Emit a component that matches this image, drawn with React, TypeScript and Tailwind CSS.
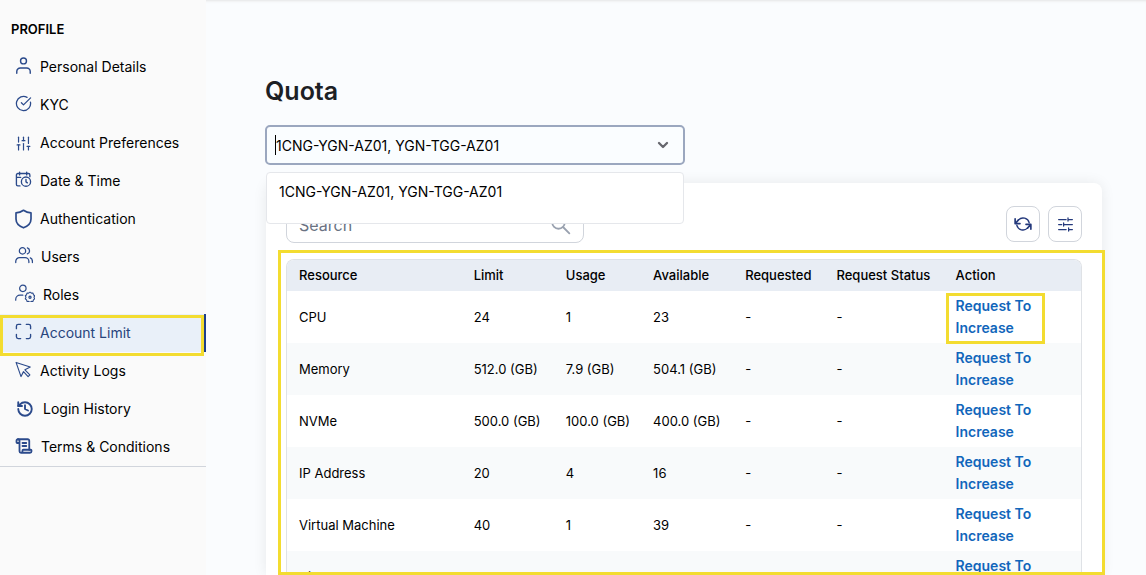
import React from "react";
import { CircleCheckBig, SlidersVertical, ScrollText, History, ChevronDown } from "lucide-react";

type IconProps = { className?: string };

const stroke = {
  viewBox: "0 0 24 24",
  fill: "none",
  stroke: "currentColor",
  strokeLinecap: "round" as const,
  strokeLinejoin: "round" as const,
  "aria-hidden": true,
};

const PersonIcon = ({ className }: IconProps) => (
  <svg {...stroke} strokeWidth="2" className={className}>
    <circle cx="12" cy="5.5" r="4.2" />
    <path d="M2.5 23v-2.5a5 5 0 0 1 5-5h9a5 5 0 0 1 5 5V23" />
  </svg>
);

const CheckIcon = ({ className }: IconProps) => <CircleCheckBig className={className} strokeWidth={1.8} />;
const SlidersIcon = ({ className }: IconProps) => <SlidersVertical className={className} strokeWidth={1.7} />;
const HistoryIcon = ({ className }: IconProps) => <History className={className} strokeWidth={2.5} />;
const TermsIcon = ({ className }: IconProps) => <ScrollText className={className} strokeWidth={2.4} />;

const CalendarClockIcon = ({ className }: IconProps) => (
  <svg {...stroke} strokeWidth="1.9" className={className}>
    <path d="M6.5 1.5v4M16.500 1.500v4M21 8V5.500a2 2 0 0 0-2-2H4a2 2 0 0 0-2 2V19a2 2 0 0 0 2 2h3M2 9h6" />
    <circle cx="15.500" cy="15" r="6.500" />
    <path d="M15.500 12v3.300l2 1.500" />
  </svg>
);

const ShieldIcon = ({ className }: IconProps) => (
  <svg viewBox="2 0 20 24" fill="none" stroke="currentColor" strokeLinejoin="round" strokeWidth="2" aria-hidden="true" className={className}>
    <path d="M12 1.500c2.500 1.700 5.500 2.900 9 3.200v7.300c0 5-3.600 8.500-9 10.600-5.400-2.100-9-5.600-9-10.600V4.700c3.500-.3 6.500-1.500 9-3.200z" />
  </svg>
);

const PeopleIcon = ({ className }: IconProps) => (
  <svg {...stroke} strokeWidth="1.7" className={className}>
    <circle cx="10" cy="6.500" r="4.200" />
    <path d="M1 22v-1.500a5 5 0 0 1 5-5h7.500a5 5 0 0 1 5 5V22M16.500 2.500a4.200 4.200 0 0 1 0 8M20.500 15.800a5 5 0 0 1 2.700 4.700V22" />
  </svg>
);

const PersonGearIcon = ({ className }: IconProps) => (
  <svg viewBox="0 0 28 24" fill="none" stroke="currentColor" strokeLinecap="round" strokeLinejoin="round" strokeWidth="1.7" aria-hidden="true" className={className}>
    <circle cx="11" cy="5.500" r="4.500" />
    <path d="M1 22v-1a6 6 0 0 1 6-6h4" />
    <path d="m21 10.800 1.900 1.400 2.300-.1.600 2.300 1.800 1.500-1 2.100 1 2.100-1.800 1.500-.6 2.200-2.300-.1-1.900 1.400-1.900-1.400-2.300.1-.6-2.200-1.800-1.500 1-2.100-1-2.100 1.800-1.500.6-2.300 2.300.1z" strokeWidth="1.500" />
    <circle cx="21" cy="18" r="1.500" />
  </svg>
);

const CornersIcon = ({ className }: IconProps) => (
  <svg {...stroke} strokeWidth="1.900" className={className}>
    <path d="M2 8V4.500A2.500 2.500 0 0 1 4.500 2H8M16 2h3.500A2.500 2.500 0 0 1 22 4.500V8M22 16v3.500a2.500 2.500 0 0 1-2.500 2.500H16M8 22H4.500A2.500 2.500 0 0 1 2 19.500V16" />
  </svg>
);

const PointerIcon = ({ className }: IconProps) => (
  <svg {...stroke} strokeWidth="1.600" className={className}>
    <path d="M1.500 2l20 6.500-7.500 4 7 7-2.500 2.500-6.500-7L8.500 22z" />
  </svg>
);

const RefreshIcon = ({ className }: IconProps) => (
  <svg {...stroke} strokeWidth="1.800" className={className}>
    <path d="M6 6.500a8.500 8.500 0 0 1 14.300 4M3.700 13.500a8.500 8.500 0 0 0 14.300 4" />
    <path d="M1.500 5v6.500H8M22.500 19v-6.500H16M2 11l4-4.500M22 13l-4 4.500" strokeWidth="2.200" />
  </svg>
);

const FilterIcon = ({ className }: IconProps) => (
  <svg {...stroke} strokeWidth="2" className={className}>
    <path d="M1 4h12M16 4h7M16 1.500v5M1 12h5M10 12h13M9 9.500v5M1 20h12M17 20h6M17 17.500v5" />
  </svg>
);

const SearchIcon = ({ className }: IconProps) => (
  <svg {...stroke} strokeWidth="2.200" className={className}>
    <circle cx="9" cy="9" r="7.500" />
    <path d="m15 15 7 7" />
  </svg>
);

const raised = "mb-1 size-[17px]";
const level = "size-[17px]";

const menu: { label: string; icon: React.ComponentType<IconProps>; box: string; active?: boolean }[] = [
  { label: "Personal Details", icon: PersonIcon, box: raised },
  { label: "KYC", icon: CheckIcon, box: raised },
  { label: "Account Preferences", icon: SlidersIcon, box: level },
  { label: "Date & Time", icon: CalendarClockIcon, box: raised },
  { label: "Authentication", icon: ShieldIcon, box: "h-5 w-[17px]" },
  { label: "Users", icon: PeopleIcon, box: "mb-1 size-[18px]" },
  { label: "Roles", icon: PersonGearIcon, box: "mb-1 h-[18px] w-5" },
  { label: "Account Limit", icon: CornersIcon, box: raised, active: true },
  { label: "Activity Logs", icon: PointerIcon, box: raised },
  { label: "Login History", icon: HistoryIcon, box: "h-[18px] w-5" },
  { label: "Terms & Conditions", icon: TermsIcon, box: "mb-0.5 size-[18px]" },
];

const columns = ["Resource", "Limit", "Usage", "Available", "Requested", "Request Status", "Action"];

const rows = [
  ["CPU", "24", "1", "23"],
  ["Memory", "512.0 (GB)", "7.9 (GB)", "504.1 (GB)"],
  ["NVMe", "500.0 (GB)", "100.0 (GB)", "400.0 (GB)"],
  ["IP Address", "20", "4", "16"],
  ["Virtual Machine", "40", "1", "39"],
  ["Virtual Router", "20", "0", "20"],
];

const region = "1CNG-YGN-AZ01, YGN-TGG-AZ01";

function Sidebar() {
  return (
    <aside className="w-[206px] shrink-0 bg-[#fafafa]">
      <nav aria-label="Profile" className="border-b border-gray-300 pt-[19px]">
        <h2 className="h-[29px] pl-[11px] text-[13px] leading-5 font-semibold text-black">PROFILE</h2>
        <ul>
          {menu.map(({ label, icon: Icon, box, active }) => (
            <li key={label} className="relative">
              <a
                href="#"
                aria-current={active ? "page" : undefined}
                className={
                  active
                    ? "flex h-[38px] items-center gap-2 border-r-2 border-[#1d3f8a] bg-[#e9f0f9] pl-[15px] text-sm text-[#27447c]"
                    : "flex h-[38px] items-center gap-2 pl-[15px] text-sm text-black"
                }
              >
                <Icon className={`shrink-0 text-[#2b4a8b] ${box}`} />
                <span className="whitespace-nowrap">{label}</span>
              </a>
              {active && <div className="pointer-events-none absolute -bottom-1 left-0 h-[41px] w-[204px] border-3 border-[#f3dc30]" />}
            </li>
          ))}
        </ul>
      </nav>
    </aside>
  );
}

function RegionSelect() {
  return (
    <div className="relative z-10 w-[420px] max-w-full">
      <div className="flex h-10 items-center rounded-[5px] border-2 border-[#9ba7bf] bg-[#fafdff] pr-3 pl-2">
        <span className="h-5 w-px bg-black" />
        <input
          role="combobox"
          aria-label="Availability zone"
          aria-expanded="true"
          aria-controls="zones"
          defaultValue={region}
          className="h-6 min-w-0 flex-1 bg-transparent text-sm text-black outline-none"
        />
        <ChevronDown className="size-4 text-[#66676e]" strokeWidth={3.5} />
      </div>
      <ul id="zones" role="listbox" aria-label="Zones" className="absolute top-[47px] right-px left-px h-[52px] rounded-sm border border-gray-200 bg-white">
        <li role="option" aria-selected="true" className="px-3 py-[9px] text-sm text-black">
          {region}
        </li>
      </ul>
    </div>
  );
}

const iconButton = "grid h-9 w-[34px] place-items-center rounded-lg border border-gray-300 bg-white text-[#24397c]";

export default function App() {
  return (
    <div className="flex h-screen overflow-hidden bg-[#fafcfe] font-[Inter,sans-serif] shadow-[inset_0_3px_3px_-2px_#e4e4e4]">
      <Sidebar />
      <main className="flex min-w-0 flex-1 flex-col pt-[74px] pr-11 pl-[59px]">
        <h1 className="mb-[17px] text-[25px] leading-[34px] font-semibold text-[#1c2024]">Quota</h1>
        <RegionSelect />
        <section className="relative mt-[18px] ml-px flex min-h-0 flex-1 flex-col rounded-t-lg bg-white px-5 pt-[23px] shadow-[0_0_14px_rgba(0,0,0,0.08)]">
          <div className="flex justify-between">
            <label className="flex h-[37px] w-[298px] items-center rounded-lg border border-gray-300 px-3">
              <input type="search" aria-label="Search" placeholder="Search" className="min-w-0 flex-1 bg-transparent text-base outline-none placeholder:text-gray-500" />
              <SearchIcon className="size-5 text-gray-400" />
            </label>
            <div className="flex gap-2">
              <button type="button" aria-label="Refresh" className={iconButton}>
                <RefreshIcon className="size-[18px]" />
              </button>
              <button type="button" aria-label="Filter columns" className={iconButton}>
                <FilterIcon className="size-[15px]" />
              </button>
            </div>
          </div>
          <div className="mt-4 min-h-0 flex-1 overflow-hidden rounded-t-lg border border-b-0 border-[#dfe2e6]">
            <table className="w-full table-fixed text-left text-[13px] text-black">
              <colgroup>
                <col className="w-[22%]" />
                <col className="w-[11.6%]" />
                <col className="w-[11%]" />
                <col className="w-[11.6%]" />
                <col className="w-[11.5%]" />
                <col className="w-[15%]" />
                <col />
              </colgroup>
              <thead>
                <tr className="h-[31px] bg-[#e8edf4]">
                  {columns.map((c) => (
                    <th key={c} scope="col" className="pl-3 font-medium whitespace-nowrap">
                      {c}
                    </th>
                  ))}
                </tr>
              </thead>
              <tbody>
                {rows.map((row, i) => (
                  <tr key={row[0]} className="h-[52px] even:bg-[#f8fafb]">
                    {[...row, "-", "-"].map((cell, j) => (
                      <td key={j} className="pt-0.5 pl-3 whitespace-nowrap">
                        {cell}
                      </td>
                    ))}
                    <td className="relative pl-3">
                      <button type="button" className="w-24 text-left text-sm leading-[22px] font-semibold text-[#1166bb]">
                        Request To Increase
                      </button>
                      {i === 0 && <div className="pointer-events-none absolute top-0.5 left-0.5 h-[51px] w-[99px] border-3 border-[#f3dc30]" />}
                    </td>
                  </tr>
                ))}
              </tbody>
            </table>
          </div>
          <div className="pointer-events-none absolute top-[67px] -right-[3px] bottom-0 left-3 border-3 border-[#f3dc30]" />
        </section>
      </main>
    </div>
  );
}
